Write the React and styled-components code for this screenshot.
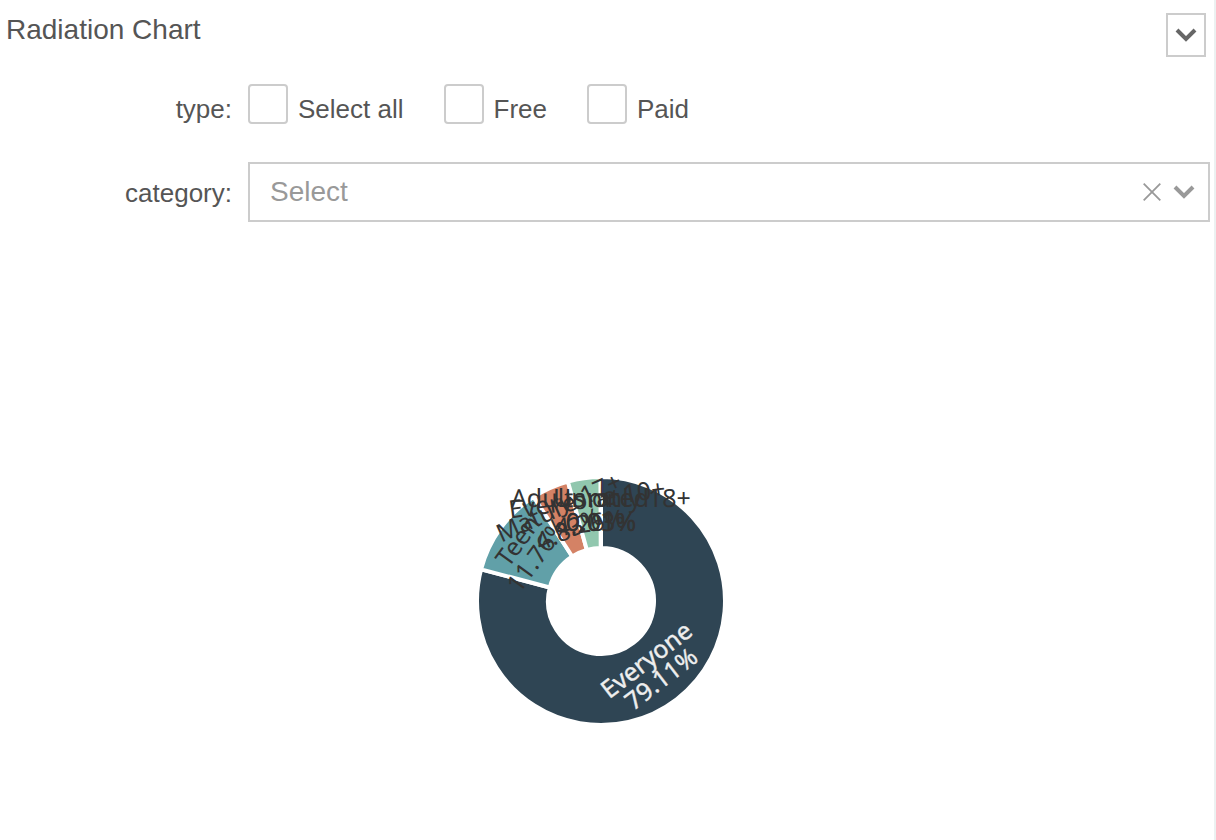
import React from 'react';
import styled, { createGlobalStyle } from 'styled-components';

const Global = createGlobalStyle`
  * { box-sizing: border-box; }
  body { margin: 0; background: #fff; font-family: "Liberation Sans", Arial, sans-serif; color: #555; }
`;
const Panel = styled.main`
  width: 1216px;
  height: 840px;
  border-right: 2px solid #ecf1f1;
  overflow: hidden;
  display: flex;
  flex-direction: column;
`;
const Header = styled.header`
  display: flex;
  justify-content: space-between;
  height: 84px;
  padding: 13px 8px 0 6px;
`;
const Title = styled.h1`
  margin: 0;
  padding-top: 1px;
  font-size: 28px;
  line-height: 32px;
  font-weight: 400;
`;
const MenuButton = styled.button`
  width: 40px;
  height: 44px;
  padding: 0;
  border: 2px solid #ccc;
  background: #fff;
  display: flex;
  align-items: center;
  justify-content: center;
`;
const Field = styled.div`
  display: flex;
  height: ${(p) => p.$height}px;
  padding-right: 4px;
`;
const FieldLabel = styled.label`
  width: 248px;
  padding: ${(p) => p.$top}px 16px 0 0;
  text-align: right;
  font-size: 26px;
  line-height: 30px;
`;
const Options = styled.div`
  display: flex;
  align-items: flex-start;
  gap: 40px;
`;
const Option = styled.label`
  display: flex;
  gap: 10px;
  font-size: 26px;
  line-height: 30px;
`;
const OptionText = styled.span`
  padding-top: 10px;
`;
const Box = styled.span`
  width: 40px;
  height: 40px;
  border: 2px solid #ccc;
  border-radius: 4px;
`;
const Select = styled.div`
  flex: 1;
  height: 60px;
  border: 2px solid #ccc;
  padding: 0 13px 0 20px;
  display: flex;
  align-items: center;
  gap: 12px;
  color: #999;
  font-size: 28px;
`;
const Placeholder = styled.span`
  flex: 1;
  line-height: 32px;
`;
const Chart = styled.svg`
  display: block;
  flex: none;
`;
const SliceLabel = styled.text`
  font-family: "Noto Sans", "Open Sans", sans-serif;
  font-size: ${(p) => (p.$light ? 24.7 : 25)}px;
  text-anchor: middle;
  fill: ${(p) => (p.$light ? '#eee' : '#333')};
  stroke: ${(p) => (p.$light ? '#eee' : 'none')};
  stroke-width: 0.4px;
`;

const Chevron = ({ color }) => (
  <svg width="22" height="16" viewBox="0 0 22 16">
    <path d="M2 3 L11 12 L20 3" fill="none" stroke={color} strokeWidth="4" />
  </svg>
);
const Clear = () => (
  <svg width="18" height="18" viewBox="0 0 18 18">
    <path d="M.7 .7 L17.3 17.3 M17.3 .7 L.7 17.3" stroke="#999" strokeWidth="1.8" />
  </svg>
);

const slices = [
  { name: 'Everyone', value: 79.11, color: '#2f4554', light: true },
  { name: 'Teen', value: 11.76, color: '#61a0a8' },
  { name: 'Mature 17+', value: 4.83, color: '#d48265' },
  { name: 'Everyone 10+', value: 4.26, color: '#91c7ae' },
  { name: 'Adults only 18+', value: 0.03, color: '#749f83' },
  { name: 'Unrated', value: 0.01, color: '#ca8622' },
];
const CX = 601;
const CY = 379;
const OUTER = 124;
const INNER = 53;
const MIDDLE = 88.5;

const at = (deg, r) => {
  const a = (deg * Math.PI) / 180;
  return [CX + r * Math.sin(a), CY - r * Math.cos(a)];
};
const arc = (start, end) => {
  const large = end - start > 180 ? 1 : 0;
  return `M${at(start, OUTER)} A${OUTER} ${OUTER} 0 ${large} 1 ${at(end, OUTER)} L${at(end, INNER)} A${INNER} ${INNER} 0 ${large} 0 ${at(start, INNER)}Z`;
};

let cursor = 0;
const shapes = slices.map((s) => {
  const start = cursor;
  cursor += s.value * 3.6;
  const mid = (start + cursor) / 2;
  const [x, y] = at(mid, MIDDLE);
  const turn = mid > 90 && mid < 270 ? mid - 180 : mid;
  return { ...s, d: arc(start, cursor), x, y, turn };
});

export default function App() {
  return (
    <>
      <Global />
      <Panel>
        <Header>
          <Title>Radiation Chart</Title>
          <MenuButton aria-label="Expand"><Chevron color="#666" /></MenuButton>
        </Header>
        <Field $height={78}>
          <FieldLabel $top={10}>type:</FieldLabel>
          <Options>
            {['Select all', 'Free', 'Paid'].map((t) => (
              <Option key={t}><Box /><OptionText>{t}</OptionText></Option>
            ))}
          </Options>
        </Field>
        <Field $height={60}>
          <FieldLabel $top={16}>category:</FieldLabel>
          <Select>
            <Placeholder>Select</Placeholder>
            <Clear />
            <Chevron color="#999" />
          </Select>
        </Field>
        <Chart width="1214" height="618" viewBox="0 0 1214 618">
          {shapes.map((s) => (
            <path key={s.name} d={s.d} fill={s.color} stroke="#fff" strokeWidth="4" strokeLinejoin="round" />
          ))}
          {shapes.map((s) => (
            <g key={s.name} transform={`translate(${s.x} ${s.y}) rotate(${s.turn})`}>
              <SliceLabel $light={s.light} y="-5.5">{s.name}</SliceLabel>
              <SliceLabel $light={s.light} y="18.5">{s.value.toFixed(2)}%</SliceLabel>
            </g>
          ))}
        </Chart>
      </Panel>
    </>
  );
}
